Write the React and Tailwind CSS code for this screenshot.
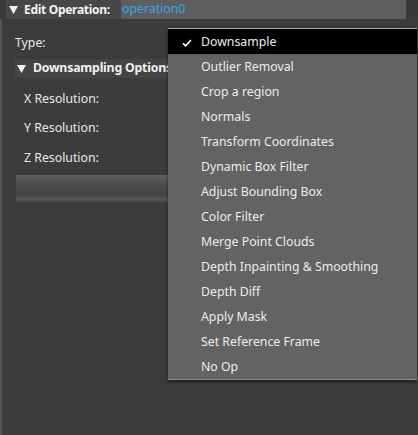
import React from 'react';

const operations = [
    'Downsample',
    'Outlier Removal',
    'Crop a region',
    'Normals',
    'Transform Coordinates',
    'Dynamic Box Filter',
    'Adjust Bounding Box',
    'Color Filter',
    'Merge Point Clouds',
    'Depth Inpainting & Smoothing',
    'Depth Diff',
    'Apply Mask',
    'Set Reference Frame',
    'No Op'
];

const Arrow = () => (
    <svg width="9" height="8" viewBox="0 0 9 8" className="shrink-0">
        <path d="M0 0 L9 0 L4.5 8 Z" fill="#f2f2f2" />
    </svg>
);

const Check = () => (
    <svg width="10" height="8" viewBox="0 0 10 8">
        <path d="M1 4.2 L3.6 6.8 L9 1" fill="none" stroke="#ffffff" strokeWidth="1.6" />
    </svg>
);

const OperationMenu = ({ selected }) => (
    <div className="absolute left-[168px] top-[28px] w-[249px] bg-[#636363] border-t border-[#a6a6a6] border-b border-b-[#8c8c8c] shadow-[0_2px_3px_rgba(0,0,0,0.5)]">
        {operations.map(op => (
            <div
                key={op}
                className={`flex items-center h-[25px] pt-[2px] ${op === selected ? 'bg-black' : ''}`}
            >
                <div className="w-[33px] flex justify-center pl-[4px]">
                    {op === selected && <Check />}
                </div>
                <span className="text-[12.3px] text-[#ececec] whitespace-nowrap">{op}</span>
            </div>
        ))}
    </div>
);

export default function App() {
    return (
        <div className="relative w-[418px] h-[435px] bg-[#3a3a3a] overflow-hidden font-['Noto_Sans',sans-serif]">
            <div className="flex h-[19px] ml-[6px] w-[400px]">
                <div className="flex items-center gap-[6px] bg-[#474747] pl-[3px] w-[115px] shrink-0">
                    <Arrow />
                    <span className="text-[12px] font-bold text-[#f4f4f4] leading-none whitespace-nowrap tracking-[-0.3px]">Edit Operation:</span>
                </div>
                <div className="flex items-center flex-1 bg-[#5e5e5e] pl-[1px]">
                    <span className="text-[12.3px] text-[#3aa7ea] leading-none">operation0</span>
                </div>
            </div>

            <div className="h-[416px] bg-[#3c3c3c] border-l-2 border-[#565656] pt-[14px] pl-[13px] pr-[2px]">
                <div className="h-[20px] flex items-center text-[12.3px] text-[#e8e8e8]">Type:</div>

                <div className="mt-[6px] h-[19px] w-[170px] flex items-center gap-[7px] bg-[#444444] pl-[2px]">
                    <Arrow />
                    <span className="text-[12.3px] font-bold text-[#f0f0f0] leading-none whitespace-nowrap tracking-[-0.2px]">Downsampling Options</span>
                </div>

                <div className="pl-[9px] text-[12.3px] text-[#e8e8e8]">
                    <div className="h-[20px] mt-[11px] flex items-center">X Resolution:</div>
                    <div className="h-[20px] mt-[9px] flex items-center">Y Resolution:</div>
                    <div className="h-[20px] mt-[10px] flex items-center">Z Resolution:</div>
                </div>

                <div className="mt-[6px] h-[29px] w-[200px] border border-[#3a3a3a] bg-[linear-gradient(to_bottom,#5e5e5e_0%,#4a4a4a_45%,#444444_75%,#585858_90%,#4a4a4a_100%)]" />
            </div>

            <OperationMenu selected="Downsample" />
        </div>
    );
}
